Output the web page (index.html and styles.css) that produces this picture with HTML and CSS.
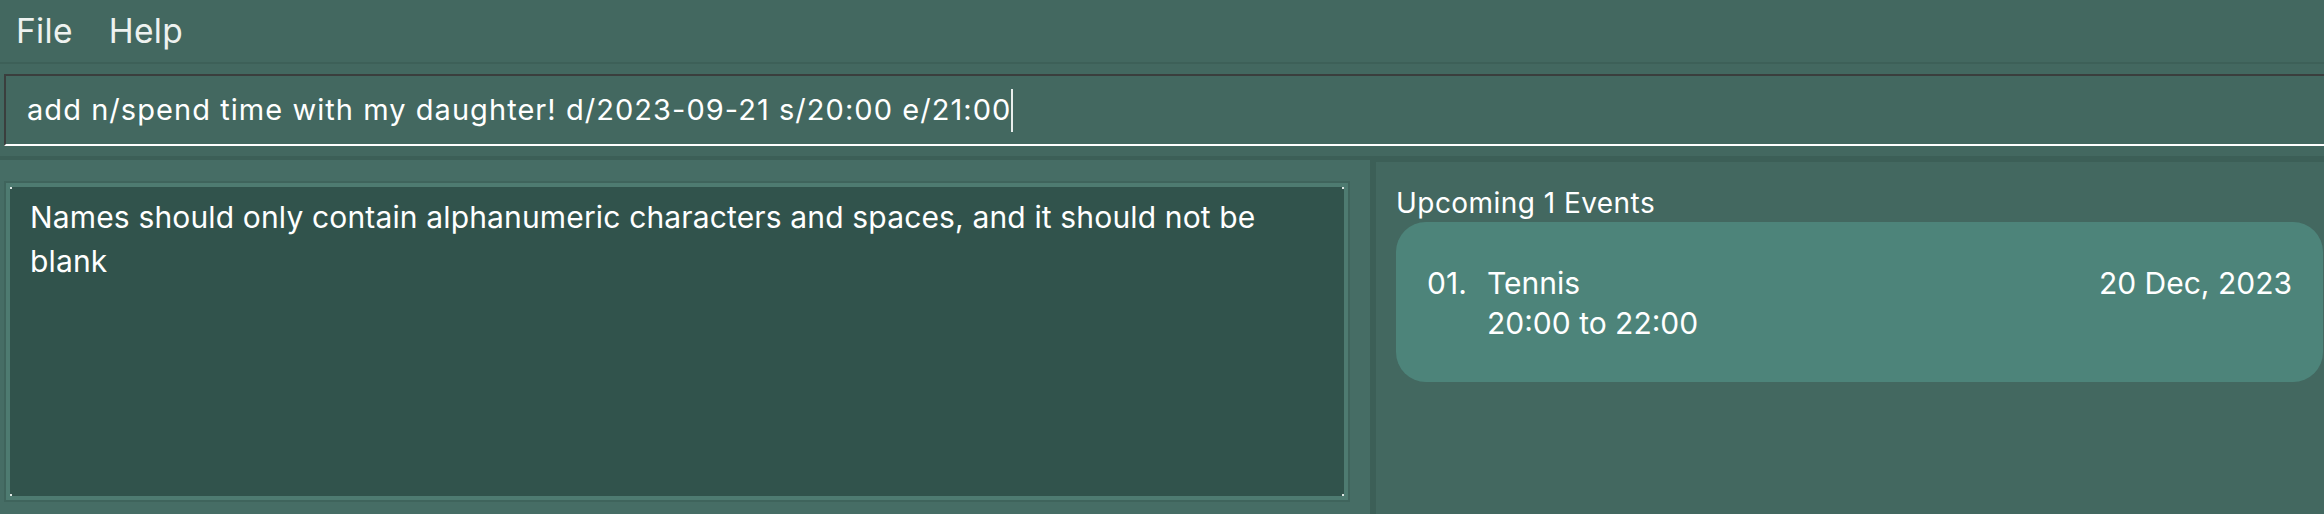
FILE: index.html
```html
<!DOCTYPE html>
<html>
<head>
<meta charset="utf-8">
<link rel="stylesheet" href="styles.css">
</head>
<body>
<div class="app">
  <nav class="menubar">
    <span class="menu-item">File</span>
    <span class="menu-item">Help</span>
  </nav>
  <div class="command-area">
    <div class="command-box"><span class="command-text">add n/spend time with my daughter! d/2023-09-21 s/20:00 e/21:00</span><span class="caret"></span></div>
  </div>
  <div class="split">
    <section class="left-pane">
      <div class="result-frame">
        <div class="result-box">
          <span class="corner corner-tl"></span>
          <span class="corner corner-tr"></span>
          <span class="corner corner-bl"></span>
          <span class="corner corner-br"></span>
          <p class="result-text">Names should only contain alphanumeric characters and spaces, and it should not be blank</p>
        </div>
      </div>
    </section>
    <div class="divider"></div>
    <section class="right-pane">
      <h2 class="events-title">Upcoming 1 Events</h2>
      <div class="event-card">
        <div class="event-index">01.</div>
        <div class="event-body">
          <div class="event-name">Tennis</div>
          <div class="event-time">20:00 to 22:00</div>
        </div>
        <div class="event-date">20 Dec, 2023</div>
      </div>
    </section>
  </div>
</div>
</body>
</html>
```

FILE: styles.css
```css
* { box-sizing: border-box; }
html, body {
  margin: 0;
  padding: 0;
}
body {
  width: 2324px;
  height: 514px;
  overflow: hidden;
  background: #436860;
  font-family: "Inter", "Liberation Sans", sans-serif;
  color: #ffffff;
}
.app {
  display: flex;
  flex-direction: column;
  height: 514px;
}
.menubar {
  display: flex;
  height: 64px;
  padding-left: 16px;
  gap: 36px;
  border-bottom: 2px solid #3d6058;
}
.menu-item {
  font-size: 33.5px;
  line-height: 62px;
  letter-spacing: 0.3px;
  color: #eef2f0;
}
.command-area {
  padding: 10px 0 10px 4px;
  height: 92px;
}
.command-box {
  height: 72px;
  border-top: 2px solid #3a3e3d;
  border-left: 2px solid #3a3e3d;
  border-bottom: 2px solid #ffffff;
  padding-left: 21px;
  display: flex;
  align-items: center;
  font-size: 29px;
  letter-spacing: 1.05px;
  line-height: 68px;
  white-space: nowrap;
}
.caret {
  display: inline-block;
  width: 2px;
  height: 43px;
  background: #e8eeec;
  margin-left: 0;
}
.split {
  flex: 1;
  display: flex;
  border-top: 4px solid #3c5f57;
}
.left-pane {
  width: 1370px;
  background: #466d65;
  padding: 21px 20px 0 4px;
}
.result-frame {
  border: 2px solid #3f645c;
  height: 321px;
}
.result-box {
  position: relative;
  height: 100%;
  border: 4px solid #4e7b71;
  background: #31534c;
  padding: 8px 30px 0 20px;
}
.corner {
  position: absolute;
  width: 2px;
  height: 2px;
  background: #dfe8e5;
}
.corner-tl { left: 0; top: 0; }
.corner-tr { right: 0; top: 0; }
.corner-bl { left: 0; bottom: 0; }
.corner-br { right: 0; bottom: 0; }
.result-text {
  margin: 0;
  font-size: 30px;
  letter-spacing: 0.15px;
  line-height: 44px;
}
.divider {
  width: 6px;
  background: #3c5f57;
}
.right-pane {
  flex: 1;
  border-top: 2px solid #3c5f57;
  padding: 22px 1px 0 20px;
}
.events-title {
  margin: 0;
  font-weight: 400;
  font-size: 28px;
  letter-spacing: 0.45px;
  line-height: 38px;
}
.event-card {
  display: flex;
  align-items: flex-start;
  height: 160px;
  background: #4d847a;
  border-radius: 30px;
  padding: 41px 31px 0 31px;
  font-size: 30px;
  line-height: 40px;
}
.event-index {
  width: 60px;
}
.event-body {
  flex: 1;
}
.event-date {
  text-align: right;
}
```
